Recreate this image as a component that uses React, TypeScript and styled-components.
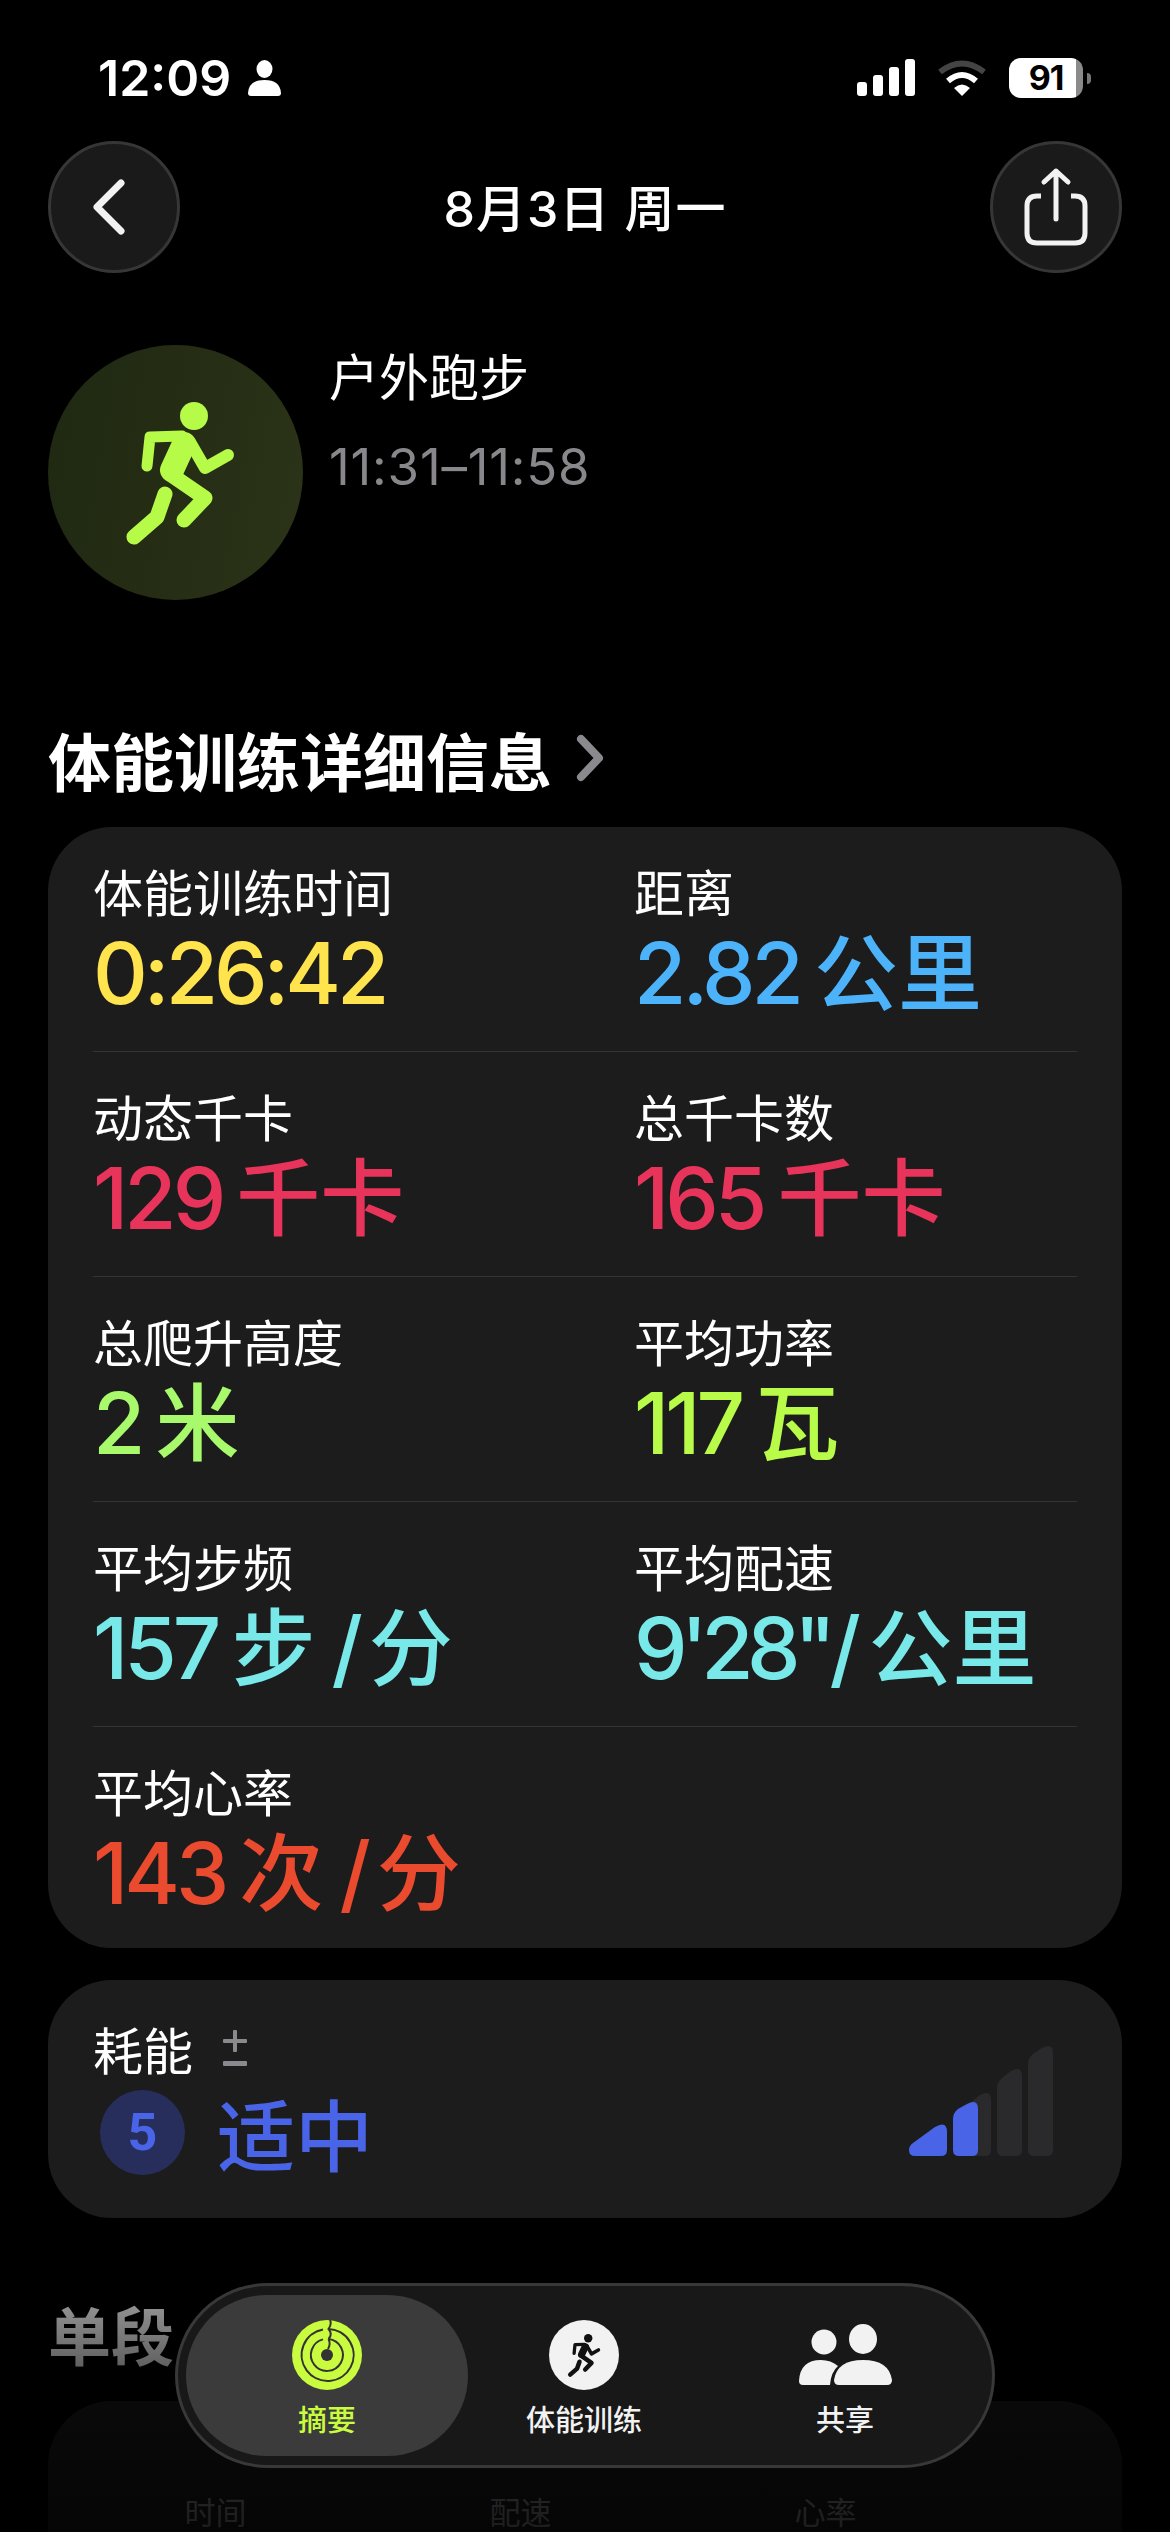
import styled, { createGlobalStyle } from 'styled-components';

const GlobalStyle = createGlobalStyle`
  html, body {
    margin: 0;
    padding: 0;
    background: #000;
  }
`;

const CJK = `'Noto Sans CJK SC', sans-serif`;
const LATIN = `Inter, 'Noto Sans CJK SC', sans-serif`;

const Screen = styled.div`
  position: relative;
  width: 1170px;
  height: 2532px;
  overflow: hidden;
  background: #000;
  color: #fff;
  font-family: ${CJK};
`;

const StatusBar = styled.div`
  height: 141px;
  box-sizing: border-box;
  padding: 50px 79px 0 98px;
  display: flex;
  justify-content: space-between;
  align-items: flex-start;
`;

const StatusLeft = styled.div`
  display: flex;
  align-items: center;
  gap: 17px;
  height: 56px;
`;

const Clock = styled.span`
  font-family: Inter, sans-serif;
  font-size: 50px;
  font-weight: 600;
  line-height: 56px;
`;

const StatusRight = styled.div`
  display: flex;
  align-items: center;
  gap: 22px;
  height: 56px;
`;

const Battery = styled.div`
  position: relative;
  width: 74px;
  height: 40px;
  border-radius: 12px;
  background: linear-gradient(90deg, #fff 91%, #8a8a8a 91%);
  color: #000;
  font-family: Inter, sans-serif;
  font-size: 34px;
  font-weight: 700;
  line-height: 40px;
  text-align: center;
  letter-spacing: -1px;
  margin-right: 8px;
  &::after {
    content: '';
    position: absolute;
    right: -8px;
    top: 15px;
    width: 4px;
    height: 11px;
    border-radius: 0 5px 5px 0;
    background: #77777a;
  }
`;

const NavBar = styled.div`
  height: 132px;
  padding: 0 48px;
  display: flex;
  justify-content: space-between;
  align-items: center;
`;

const RoundButton = styled.div`
  width: 132px;
  height: 132px;
  box-sizing: border-box;
  border-radius: 50%;
  background: #1a1a1a;
  border: 3px solid #363636;
  display: flex;
  align-items: center;
  justify-content: center;
`;

const BackIcon = styled.svg`
  margin-right: 10px;
`;

const NavTitle = styled.div`
  padding-top: 3px;
  font-family: ${LATIN};
  font-size: 50px;
  font-weight: 500;
  line-height: 60px;
  letter-spacing: 1px;
`;

const Workout = styled.div`
  margin-top: 72px;
  padding-left: 48px;
  display: flex;
  gap: 26px;
  height: 255px;
`;

const WorkoutBadge = styled.div`
  width: 255px;
  height: 255px;
  box-sizing: border-box;
  padding-left: 9px;
  border-radius: 50%;
  background: linear-gradient(100deg, #1f2811, #2b3418);
  display: flex;
  align-items: center;
  justify-content: center;
`;

const WorkoutName = styled.div`
  margin-top: -1px;
  font-size: 50px;
  line-height: 60px;
`;

const WorkoutTime = styled.div`
  margin-top: 33px;
  font-family: Inter, sans-serif;
  font-size: 51px;
  line-height: 60px;
  letter-spacing: 0.8px;
  color: #87878c;
`;

const SectionTitle = styled.div`
  display: flex;
  align-items: center;
  gap: 24px;
  height: 80px;
  padding-left: 48px;
  font-size: 63px;
  font-weight: 700;
  color: #fff;
`;

const DetailsTitle = styled(SectionTitle)`
  margin-top: 118px;
  margin-bottom: 29px;
`;

const SplitsTitle = styled(SectionTitle)`
  margin-top: 74px;
  margin-bottom: 29px;
`;

const Card = styled.div`
  margin: 0 48px;
  background: #1c1c1c;
  border-radius: 64px;
`;

const MetricsCard = styled(Card)`
  padding: 0 45px;
  height: 1121px;
`;

const MetricRow = styled.div<{ $last?: boolean }>`
  height: 225px;
  box-sizing: border-box;
  padding-top: 33px;
  display: grid;
  grid-template-columns: 541px 1fr;
  border-bottom: ${(p) => (p.$last ? 'none' : '1.5px solid #343434')};
`;

const Label = styled.div`
  font-size: 50px;
  line-height: 60px;
  color: #fff;
`;

const Value = styled.div<{ $color: string }>`
  margin-top: 4px;
  font-family: ${LATIN};
  font-size: 85px;
  font-weight: 500;
  line-height: 100px;
  letter-spacing: -4px;
  color: ${(p) => p.$color};
  white-space: nowrap;
`;

const Unit = styled.span`
  font-family: ${CJK};
  font-size: 84px;
  font-weight: 500;
  line-height: 0;
  letter-spacing: 0;
  margin-left: 14px;
`;

const Slash = styled.span`
  margin-left: 16px;
  margin-right: -4px;
`;

const Pace = styled.span`
  letter-spacing: -6.5px;
`;

const EffortCard = styled(Card)`
  margin-top: 32px;
  height: 238px;
  box-sizing: border-box;
  padding: 38px 63px 0 45px;
  display: flex;
  justify-content: space-between;
`;

const EffortLabel = styled.div`
  display: flex;
  align-items: center;
  gap: 30px;
`;

const EffortValue = styled.div`
  margin-top: 12px;
  display: flex;
  align-items: center;
  gap: 32px;
  padding-left: 7px;
  font-size: 78px;
  font-weight: 500;
  line-height: 85px;
  color: #4a64e8;
`;

const EffortBadge = styled.div`
  width: 85px;
  height: 85px;
  border-radius: 50%;
  background: #272e5c;
  display: flex;
  align-items: center;
  justify-content: center;
  font-family: Roboto, sans-serif;
  font-size: 52px;
  font-weight: 700;
  color: #4a64e8;
`;

const EffortBars = styled.svg`
  margin-top: 22px;
`;

const SplitsCard = styled(Card)`
  height: 200px;
  box-sizing: border-box;
  padding: 90px 0 0 15px;
  display: grid;
  grid-template-columns: repeat(3, 305px);
  justify-items: center;
  align-content: start;
  font-size: 31px;
  line-height: 40px;
  color: #9a9a9e;
`;

const BottomFade = styled.div`
  position: absolute;
  left: 0;
  right: 0;
  top: 2230px;
  height: 302px;
  background: linear-gradient(
    180deg,
    rgba(0, 0, 0, 0) 0%,
    rgba(0, 0, 0, 0.43) 25%,
    rgba(0, 0, 0, 0.62) 45%,
    rgba(0, 0, 0, 0.82) 100%
  );
`;

const TabBar = styled.div`
  position: absolute;
  left: 175px;
  top: 2283px;
  width: 820px;
  height: 185px;
  box-sizing: border-box;
  padding: 9px 8px;
  border-radius: 93px;
  background: #181818;
  border: 3px solid #383838;
  display: grid;
  grid-template-columns: 282px 232px 290px;
`;

const Tab = styled.div<{ $active?: boolean }>`
  display: flex;
  flex-direction: column;
  align-items: center;
  padding-top: 25px;
  border-radius: 81px;
  background: ${(p) => (p.$active ? '#3b3b3b' : 'transparent')};
  color: ${(p) => (p.$active ? '#c9fb3f' : '#f2f2f2')};
`;

const TabIcon = styled.div`
  height: 70px;
  display: flex;
  align-items: center;
  justify-content: center;
`;

const TabDisc = styled(TabIcon)`
  width: 70px;
  border-radius: 50%;
  background: #f2f2f2;
`;

const TabLabel = styled.div`
  margin-top: 10px;
  font-size: 29px;
  font-weight: 500;
  line-height: 36px;
`;

interface IPart {
  text: string;
  kind: 'num' | 'unit' | 'slash' | 'pace';
}

interface IMetric {
  label: string;
  color: string;
  parts: IPart[];
}

const num = (text: string): IPart => ({ text, kind: 'num' });
const unit = (text: string): IPart => ({ text, kind: 'unit' });
const slash: IPart = { text: '/', kind: 'slash' };

const metricRows: IMetric[][] = [
  [
    { label: '体能训练时间', color: '#ffe44d', parts: [num('0:26:42')] },
    { label: '距离', color: '#4cb3fb', parts: [num('2.82'), unit('公里')] },
  ],
  [
    { label: '动态千卡', color: '#e8345a', parts: [num('129'), unit('千卡')] },
    { label: '总千卡数', color: '#e8345a', parts: [num('165'), unit('千卡')] },
  ],
  [
    { label: '总爬升高度', color: '#a8f96c', parts: [num('2'), unit('米')] },
    { label: '平均功率', color: '#b8fb48', parts: [num('117'), unit('瓦')] },
  ],
  [
    {
      label: '平均步频',
      color: '#78e8e8',
      parts: [num('157'), unit('步'), slash, unit('分')],
    },
    {
      label: '平均配速',
      color: '#78e8e8',
      parts: [{ text: `9'28"/`, kind: 'pace' }, unit('公里')],
    },
  ],
  [
    {
      label: '平均心率',
      color: '#ea4a2d',
      parts: [num('143'), unit('次'), slash, unit('分')],
    },
  ],
];

function Runner({ color, width }: { color: string; width: number }) {
  return (
    <svg
      width={width}
      height={(width * 155) / 120}
      viewBox="120 395 120 155"
      fill="none"
      stroke={color}
      strokeLinecap="round"
      strokeLinejoin="round"
    >
      <ellipse cx="194" cy="416" rx="14" ry="14" fill={color} stroke="none" />
      <polyline points="182,436 150,437 147,466" strokeWidth="11" />
      <line x1="184" y1="444" x2="172" y2="470" strokeWidth="24" />
      <polyline points="190,442 205,468 228,455" strokeWidth="12" />
      <polyline points="170,474 205,498 184,520" strokeWidth="15" />
      <polyline points="165,494 157,517 134,537" strokeWidth="15" />
    </svg>
  );
}

function ringArc(r: number) {
  return `M${36.5} ${35 - r} A${r} ${r} 0 1 1 ${31} ${35.4 - r}`;
}

function Rings() {
  return (
    <svg width="70" height="70" viewBox="0 0 70 70">
      <circle cx="35" cy="35" r="35" fill="#c9fb3f" />
      <circle cx="35" cy="35" r="6" fill="#333" />
      <g fill="none" stroke="#333" strokeWidth="2">
        <path d={ringArc(16)} />
        <path d={ringArc(26)} />
        <path d="M36.5 19 Q41 14 36.5 9 Q40 4 38 0" />
        <path d="M36 29 Q39 24 36.5 19" />
      </g>
    </svg>
  );
}

function People() {
  return (
    <svg width="93" height="62" viewBox="0 0 93 62" fill="#f2f2f2">
      <circle cx="25" cy="18" r="12.5" />
      <ellipse cx="64" cy="15" rx="14" ry="15" />
      <path d="M0 57 Q1 36 22 36 Q32 36 39 42 Q32 48 31 61 H4 Q0 61 0 57Z" />
      <path d="M35 56 Q38 36 64 36 Q90 36 93 56 Q93 61 88 61 H40 Q35 61 35 56Z" />
    </svg>
  );
}

function effortBar(x: number, right: number, left: number) {
  return `M${x} ${left + 6} Q${x} ${left} ${x + 5} ${left - 4} L${x + 14} ${right + 3} Q${x + 25} ${right - 3} ${x + 25} ${right + 8} V110 Q${x + 25} 116 ${x + 19} 116 H${x + 6} Q${x} 116 ${x} 110 Z`;
}

function renderPart(part: IPart, key: number) {
  if (part.kind === 'unit') return <Unit key={key}>{part.text}</Unit>;
  if (part.kind === 'slash') return <Slash key={key}>{part.text}</Slash>;
  if (part.kind === 'pace') return <Pace key={key}>{part.text}</Pace>;
  return <span key={key}>{part.text}</span>;
}

function App() {
  return (
    <Screen>
      <GlobalStyle />
      <StatusBar>
        <StatusLeft>
          <Clock>12:09</Clock>
          <svg width="33" height="36" viewBox="0 0 33 36" fill="#fff">
            <ellipse cx="16.5" cy="9" rx="8" ry="9" />
            <path d="M0 33 Q1 20 16.5 20 Q32 20 33 33 Q33 36 30 36 H3 Q0 36 0 33Z" />
          </svg>
        </StatusLeft>
        <StatusRight>
          <svg width="58" height="38" viewBox="0 0 58 38" fill="#fff">
            <rect x="0" y="23" width="10" height="14" rx="3" />
            <rect x="16" y="16" width="10" height="21" rx="3" />
            <rect x="32" y="8" width="10" height="29" rx="3" />
            <rect x="48" y="0" width="10" height="37" rx="3" />
          </svg>
          <svg width="50" height="38" viewBox="0 0 50 38" fill="none">
            <path d="M3 13 Q25 -4 47 13" stroke="#444" strokeWidth="6" />
            <path d="M11 22 Q25 10 39 22" stroke="#fff" strokeWidth="6" />
            <path d="M17 29 L25 37 L33 29 Q25 22 17 29Z" fill="#fff" />
          </svg>
          <Battery>91</Battery>
        </StatusRight>
      </StatusBar>

      <NavBar>
        <RoundButton>
          <BackIcon width="32" height="56" viewBox="0 0 32 56" fill="none">
            <polyline
              points="28,4 4,28 28,52"
              stroke="#f2f2f2"
              strokeWidth="7"
              strokeLinecap="round"
              strokeLinejoin="round"
            />
          </BackIcon>
        </RoundButton>
        <NavTitle>8月3日 周一</NavTitle>
        <RoundButton>
          <svg width="64" height="80" viewBox="0 0 64 80" fill="none">
            <path
              d="M17 29 H13 Q3 29 3 39 V66 Q3 76 13 76 H51 Q61 76 61 66 V39 Q61 29 51 29 H47"
              stroke="#f2f2f2"
              strokeWidth="5"
            />
            <path
              d="M32 52 V4 M20 15 L32 4 L44 15"
              stroke="#f2f2f2"
              strokeWidth="5"
              strokeLinecap="round"
              strokeLinejoin="round"
            />
          </svg>
        </RoundButton>
      </NavBar>

      <Workout>
        <WorkoutBadge>
          <Runner color="#b6fb47" width={120} />
        </WorkoutBadge>
        <div>
          <WorkoutName>户外跑步</WorkoutName>
          <WorkoutTime>11:31–11:58</WorkoutTime>
        </div>
      </Workout>

      <DetailsTitle>
        体能训练详细信息
        <svg width="28" height="48" viewBox="0 0 28 48" fill="none">
          <polyline
            points="5,5 23,24 5,43"
            stroke="#8a8a8e"
            strokeWidth="8"
            strokeLinecap="round"
            strokeLinejoin="round"
          />
        </svg>
      </DetailsTitle>

      <MetricsCard>
        {metricRows.map((row, i) => (
          <MetricRow key={row[0].label} $last={i === metricRows.length - 1}>
            {row.map((metric) => (
              <div key={metric.label}>
                <Label>{metric.label}</Label>
                <Value $color={metric.color}>{metric.parts.map(renderPart)}</Value>
              </div>
            ))}
          </MetricRow>
        ))}
      </MetricsCard>

      <EffortCard>
        <div>
          <EffortLabel>
            <Label>耗能</Label>
            <svg width="24" height="36" viewBox="0 0 24 36" fill="#8a8a8e">
              <rect x="0" y="9" width="24" height="4" rx="1" />
              <rect x="10" y="0" width="4" height="22" rx="1" />
              <rect x="0" y="31" width="24" height="5" rx="1" />
            </svg>
          </EffortLabel>
          <EffortValue>
            <EffortBadge>5</EffortBadge>
            适中
          </EffortValue>
        </div>
        <EffortBars width="154" height="120" viewBox="0 0 154 120">
          <path d={effortBar(123, 5, 18)} fill="#2a2a2c" />
          <path d={effortBar(92, 28, 42)} fill="#2a2a2c" />
          <path d={effortBar(61, 52, 66)} fill="#2a2a2c" />
          <path d={effortBar(48, 61, 73)} fill="#4a64e8" />
          <path
            d="M4 110 Q4 106 8 103 L30 87 Q42 80 42 92 V110 Q42 116 36 116 H10 Q4 116 4 110Z"
            fill="#4a64e8"
          />
        </EffortBars>
      </EffortCard>

      <SplitsTitle>单段</SplitsTitle>
      <SplitsCard>
        <span>时间</span>
        <span>配速</span>
        <span>心率</span>
      </SplitsCard>

      <BottomFade />

      <TabBar>
        <Tab $active>
          <TabIcon>
            <Rings />
          </TabIcon>
          <TabLabel>摘要</TabLabel>
        </Tab>
        <Tab>
          <TabDisc>
            <Runner color="#111" width={36} />
          </TabDisc>
          <TabLabel>体能训练</TabLabel>
        </Tab>
        <Tab>
          <TabIcon>
            <People />
          </TabIcon>
          <TabLabel>共享</TabLabel>
        </Tab>
      </TabBar>
    </Screen>
  );
}

export default App;
